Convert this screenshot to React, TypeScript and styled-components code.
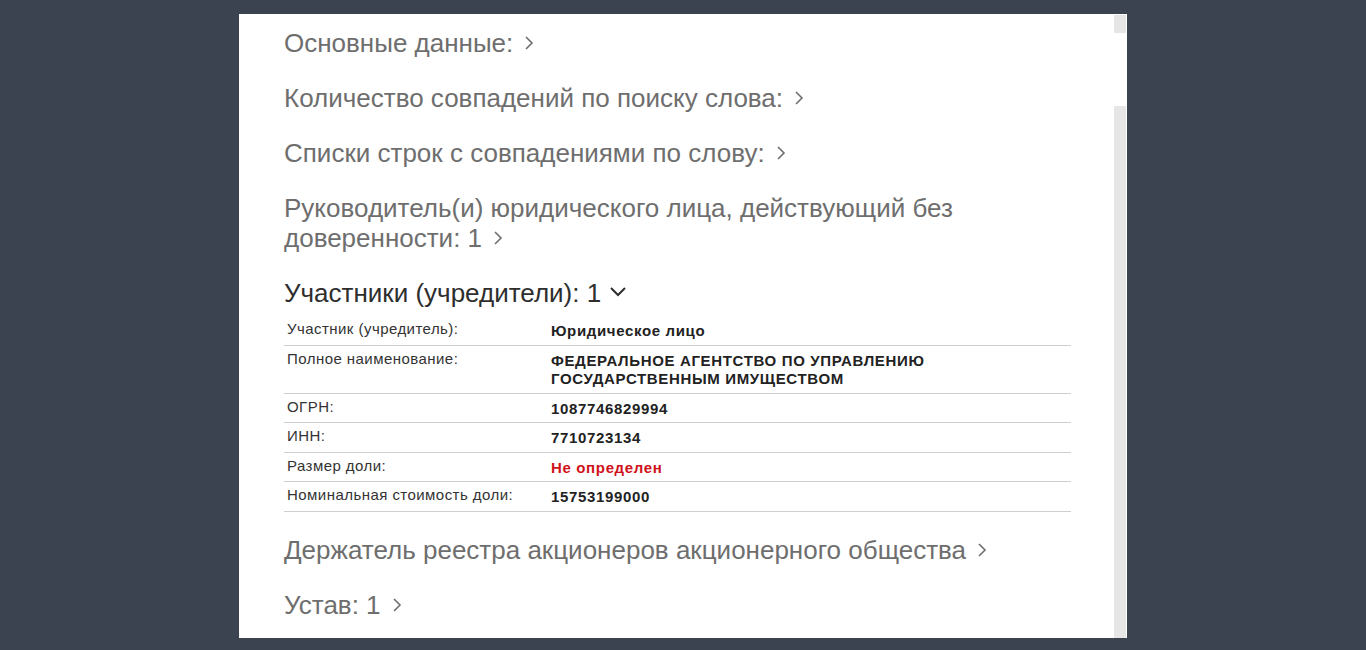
import React from "react";
import styled, { createGlobalStyle } from "styled-components";

const Global = createGlobalStyle`
  html, body { margin: 0; padding: 0; }
  body {
    background: #3c4350;
    font-family: "Liberation Sans", Arial, sans-serif;
    height: 650px;
    overflow: hidden;
  }
`;

const Page = styled.div`
  display: flex;
  justify-content: center;
  padding-top: 14px;
`;

const Panel = styled.div`
  width: 888px;
  height: 624px;
  background: #ffffff;
  display: flex;
  overflow: hidden;
`;

const Content = styled.div`
  flex: 1;
  padding: 14px 43px 0 45px;
`;

const Scrollbar = styled.div`
  width: 12px;
  margin-right: 1px;
  display: flex;
  flex-direction: column;
`;

const ScrollButton = styled.div`
  height: 18px;
  margin-top: 1px;
  background: #e6e6e6;
`;

const ScrollTrack = styled.div`
  flex: 1;
  display: flex;
  flex-direction: column;
  padding-top: 73px;
`;

const ScrollThumb = styled.div`
  flex: 1;
  background: #e6e6e6;
`;

const Section = styled.div`
  margin-bottom: 25px;
`;

const Heading = styled.div<{ $open?: boolean }>`
  font-size: 26px;
  line-height: 30px;
  color: ${(p) => (p.$open ? "#2e2e2e" : "#6e6e6e")};
`;

const Chevron = styled.svg<{ $gap: number; $lift: number }>`
  display: inline-block;
  vertical-align: ${(p) => p.$lift}px;
  margin-left: ${(p) => p.$gap}px;
`;

const Right = () => (
  <Chevron $gap={11} $lift={1} width="10" height="16" viewBox="0 0 10 16" fill="none">
    <path d="M2 2 L8 8 L2 14" stroke="currentColor" strokeWidth="1.6" />
  </Chevron>
);

const Down = () => (
  <Chevron $gap={8} $lift={4} width="18" height="12" viewBox="0 0 18 12" fill="none">
    <path d="M2 2 L9 9 L16 2" stroke="currentColor" strokeWidth="2" />
  </Chevron>
);

const Table = styled.table`
  width: 100%;
  border-collapse: collapse;
  margin-top: 8px;
  margin-bottom: 23px;
`;

const Row = styled.tr`
  border-bottom: 1px solid #cfcfcf;
`;

const Label = styled.td`
  width: 264px;
  padding: 4px 0 6px 3px;
  font-size: 15px;
  line-height: 18.5px;
  letter-spacing: 0.45px;
  color: #333333;
  vertical-align: top;
`;

const Value = styled.td<{ $red?: boolean }>`
  padding: 6px 0 4px 0;
  font-size: 15px;
  line-height: 18.5px;
  letter-spacing: 0.65px;
  font-weight: bold;
  color: ${(p) => (p.$red ? "#d0121b" : "#222222")};
  vertical-align: top;
`;

const rows: { label: string; value: React.ReactNode; red?: boolean }[] = [
  { label: "Участник (учредитель):", value: "Юридическое лицо" },
  {
    label: "Полное наименование:",
    value: (
      <>
        ФЕДЕРАЛЬНОЕ АГЕНТСТВО ПО УПРАВЛЕНИЮ
        <br />
        ГОСУДАРСТВЕННЫМ ИМУЩЕСТВОМ
      </>
    ),
  },
  { label: "ОГРН:", value: "1087746829994" },
  { label: "ИНН:", value: "7710723134" },
  { label: "Размер доли:", value: "Не определен", red: true },
  { label: "Номинальная стоимость доли:", value: "15753199000" },
];

export default function App() {
  return (
    <>
      <Global />
      <Page>
        <Panel>
          <Content>
            <Section>
              <Heading>
                Основные данные:
                <Right />
              </Heading>
            </Section>
            <Section>
              <Heading>
                Количество совпадений по поиску слова:
                <Right />
              </Heading>
            </Section>
            <Section>
              <Heading>
                Списки строк с совпадениями по слову:
                <Right />
              </Heading>
            </Section>
            <Section>
              <Heading>
                Руководитель(и) юридического лица, действующий без
                <br />
                доверенности: 1
                <Right />
              </Heading>
            </Section>
            <div>
              <Heading $open>
                Участники (учредители): 1
                <Down />
              </Heading>
              <Table>
                <tbody>
                  {rows.map((r) => (
                    <Row key={r.label}>
                      <Label>{r.label}</Label>
                      <Value $red={r.red}>{r.value}</Value>
                    </Row>
                  ))}
                </tbody>
              </Table>
            </div>
            <Section>
              <Heading>
                Держатель реестра акционеров акционерного общества
                <Right />
              </Heading>
            </Section>
            <Section>
              <Heading>
                Устав: 1
                <Right />
              </Heading>
            </Section>
          </Content>
          <Scrollbar>
            <ScrollButton />
            <ScrollTrack>
              <ScrollThumb />
            </ScrollTrack>
          </Scrollbar>
        </Panel>
      </Page>
    </>
  );
}
